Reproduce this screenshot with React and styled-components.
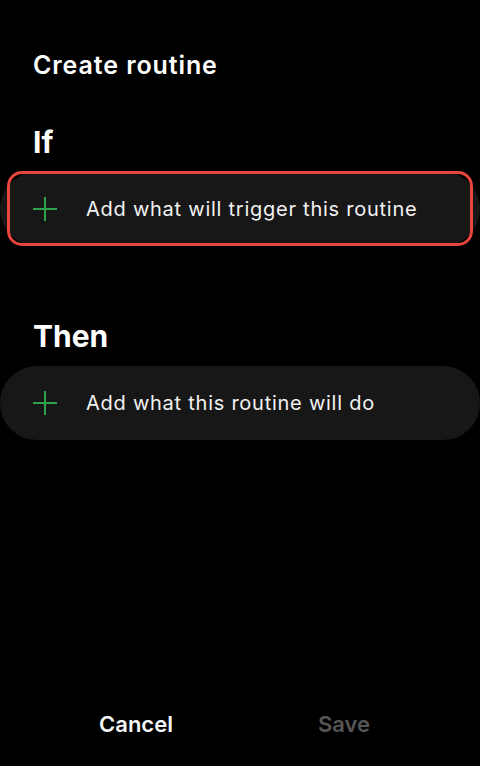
import React from "react";
import styled, { createGlobalStyle } from "styled-components";

const Global = createGlobalStyle`
  html, body { margin: 0; padding: 0; background: #000; }
  body { font-family: Inter, Roboto, "Noto Sans", "Liberation Sans", sans-serif; }
  * { box-sizing: border-box; }
`;

const Page = styled.div`
  width: 480px;
  height: 766px;
  background: #000;
  display: flex;
  flex-direction: column;
  color: #fff;
`;

const Title = styled.h1`
  margin: 50px 0 0 33px;
  font-size: 25px;
  line-height: 30px;
  font-weight: 600;
  letter-spacing: 0.9px;
`;

const SectionLabel = styled.h2`
  margin: ${(p) => p.$top}px 0 12px 33px;
  font-size: 30px;
  line-height: 36px;
  font-weight: 700;
`;

const CardWrap = styled.div`
  position: relative;
`;

const Card = styled.button`
  width: 480px;
  height: 74px;
  border: none;
  border-radius: 37px;
  background: #171717;
  display: flex;
  align-items: center;
  gap: 29px;
  padding: 0 0 0 33px;
  color: #f2f2f2;
  font-family: inherit;
  font-size: 20px;
  font-weight: 400;
  letter-spacing: 0.75px;
  text-align: left;
  cursor: pointer;
`;

const Highlight = styled.div`
  position: absolute;
  top: -1px;
  bottom: 0;
  left: 7px;
  right: 7px;
  border: 3.5px solid #e8453c;
  border-radius: 15px;
  pointer-events: none;
`;

const Spacer = styled.div`
  flex: 1;
`;

const Footer = styled.div`
  display: flex;
  padding: 0 32px 29px;
`;

const FooterButton = styled.button`
  flex: 1;
  background: none;
  border: none;
  font-family: inherit;
  font-size: 22px;
  line-height: 26px;
  font-weight: 600;
  color: ${(p) => (p.$disabled ? "#555555" : "#f5f5f5")};
  padding: 0;
`;

const PlusIcon = () => (
  <svg width="24" height="24" viewBox="0 0 24 24" fill="none">
    <path d="M12 0v24M0 12h24" stroke="#2ea24a" strokeWidth="2" />
  </svg>
);

export default function App() {
  return (
    <Page>
      <Global />
      <Title>Create routine</Title>
      <SectionLabel $top={44}>If</SectionLabel>
      <CardWrap>
        <Card>
          <PlusIcon />
          Add what will trigger this routine
        </Card>
        <Highlight />
      </CardWrap>
      <SectionLabel $top={72}>Then</SectionLabel>
      <Card>
        <PlusIcon />
        Add what this routine will do
      </Card>
      <Spacer />
      <Footer>
        <FooterButton>Cancel</FooterButton>
        <FooterButton $disabled>Save</FooterButton>
      </Footer>
    </Page>
  );
}
